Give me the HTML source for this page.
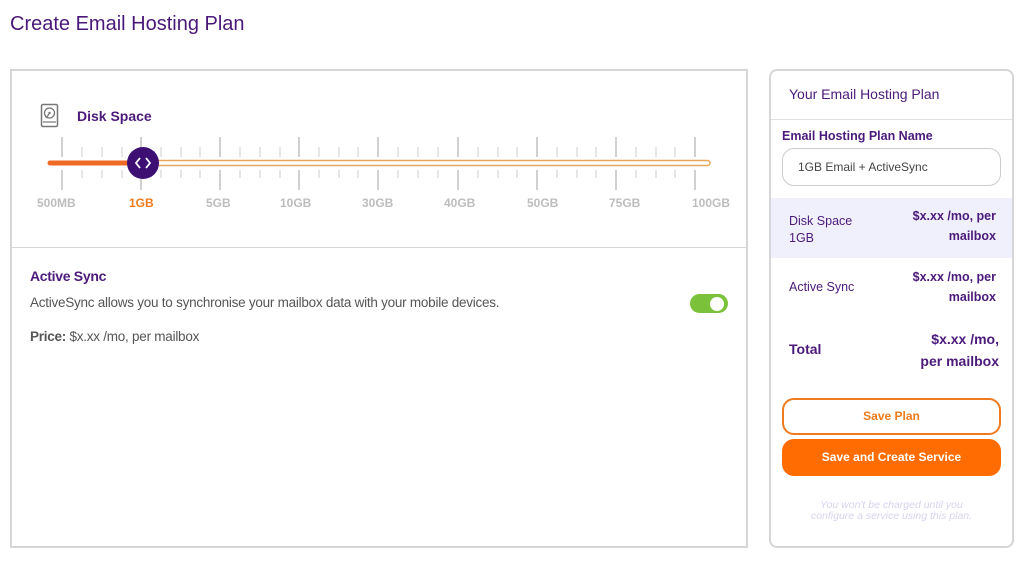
<!DOCTYPE html>
<html><head><meta charset="utf-8"><style>
*{margin:0;padding:0;box-sizing:border-box}
body{width:1024px;height:561px;background:#fff;font-family:"Liberation Sans",sans-serif;position:relative;overflow:hidden}
.a{position:absolute;white-space:nowrap}
.p{color:#4b1a7a}
</style></head><body>
<div class="a p" style="left:10px;top:13px;font-size:20px;color:#4a1878">Create Email Hosting Plan</div>

<div class="a" style="left:10px;top:69px;width:738px;height:479px;border:2px solid #d6d6d9"></div>
<div class="a" style="left:11px;top:247px;width:736px;height:1px;background:#d6d6d9"></div>

<svg class="a" style="left:40px;top:103px" width="20" height="26" viewBox="0 0 20 26"><rect x="1.5" y="1.5" width="16" height="22" rx="1.5" fill="none" stroke="#777" stroke-width="1.5"/><circle cx="9.5" cy="10" r="5" fill="none" stroke="#777" stroke-width="1.3"/><circle cx="9.5" cy="10" r="1.2" fill="#777"/><line x1="9" y1="11" x2="6" y2="15" stroke="#777" stroke-width="1.3"/><line x1="3" y1="19" x2="16" y2="19" stroke="#777" stroke-width="1.2"/></svg>
<div class="a p" style="left:77px;top:108px;font-size:14px;font-weight:bold">Disk Space</div>

<svg class="a" style="left:0;top:130px" width="760" height="90">
<g stroke="#c4c4c4" stroke-width="1.6">
<path d="M62 7v20M62 40v20M141 7v20M141 40v20M220 7v20M220 40v20M299 7v20M299 40v20M378 7v20M378 40v20M458 7v20M458 40v20M537 7v20M537 40v20M616 7v20M616 40v20M695 7v20M695 40v20"/>
</g>
<g stroke="#dcdcdc" stroke-width="1.4" id="m"></g>
<path stroke="#dcdcdc" stroke-width="1.4" d="
M82 17v10M82 40v8M102 17v10M102 40v8M122 17v10M122 40v8
M161 17v10M161 40v8M181 17v10M181 40v8M200 17v10M200 40v8
M240 17v10M240 40v8M260 17v10M260 40v8M280 17v10M280 40v8
M319 17v10M319 40v8M339 17v10M339 40v8M358 17v10M358 40v8
M398 17v10M398 40v8M418 17v10M418 40v8M438 17v10M438 40v8
M478 17v10M478 40v8M498 17v10M498 40v8M517 17v10M517 40v8
M557 17v10M557 40v8M577 17v10M577 40v8M596 17v10M596 40v8
M636 17v10M636 40v8M656 17v10M656 40v8M675 17v10M675 40v8"/>
<rect x="143" y="30.5" width="567" height="5" rx="2.5" fill="#fff" stroke="#e8a65a" stroke-width="1.4"/>
<line x1="50" y1="33" x2="143" y2="33" stroke="#ef6a24" stroke-width="5" stroke-linecap="round"/>
<circle cx="143" cy="33" r="16" fill="#3d0f73"/>
<path d="M140 28l-4 5 4 5M146 28l4 5-4 5" fill="none" stroke="#fff" stroke-width="1.8"/>
</svg>
<div class="a" style="top:196px;left:0;width:760px;font-size:12px;color:#bdbdbd;font-weight:bold">
<span class="a" style="left:37px">500MB</span><span class="a" style="left:129px;color:#ef7a1a">1GB</span><span class="a" style="left:206px">5GB</span><span class="a" style="left:280px">10GB</span><span class="a" style="left:362px">30GB</span><span class="a" style="left:444px">40GB</span><span class="a" style="left:527px">50GB</span><span class="a" style="left:609px">75GB</span><span class="a" style="left:692px">100GB</span></div>

<div class="a p" style="left:30px;top:268px;font-size:14px;font-weight:bold;letter-spacing:-0.3px">Active Sync</div>
<div class="a" style="left:30px;top:295px;font-size:13.5px;color:#555;letter-spacing:-0.25px">ActiveSync allows you to synchronise your mailbox data with your mobile devices.</div>
<div class="a" style="left:30px;top:329px;font-size:13.5px;color:#555;letter-spacing:-0.25px"><b>Price:</b> $x.xx /mo, per mailbox</div>
<div class="a" style="left:690px;top:294px;width:38px;height:19px;border-radius:10px;background:#7cc13a"></div>
<div class="a" style="left:710px;top:297px;width:14px;height:14px;border-radius:50%;background:#fff"></div>

<div class="a" style="left:769px;top:69px;width:245px;height:479px;border:2px solid #d6d6d9;border-radius:8px"></div>
<div class="a" style="left:771px;top:119px;width:241px;height:1px;background:#e0e0e0"></div>
<div class="a p" style="left:789px;top:86px;font-size:14px">Your Email Hosting Plan</div>
<div class="a p" style="left:782px;top:129px;font-size:12.5px;font-weight:bold">Email Hosting Plan Name</div>
<div class="a" style="left:782px;top:148px;width:219px;height:38px;border:1px solid #ccc;border-radius:12px;font-size:12px;color:#444;padding:11px 0 0 15px">1GB Email + ActiveSync</div>
<div class="a" style="left:771px;top:198px;width:241px;height:60px;background:#f0effc"></div>
<div class="a p" style="left:789px;top:213px;font-size:12.5px;line-height:17px">Disk Space<br>1GB</div>
<div class="a p" style="right:28px;top:206px;font-size:12.5px;line-height:20px;text-align:right;font-weight:bold">$x.xx /mo, per<br>mailbox</div>
<div class="a p" style="left:789px;top:280px;font-size:12.5px">Active Sync</div>
<div class="a p" style="right:28px;top:267px;font-size:12.5px;line-height:20px;text-align:right;font-weight:bold">$x.xx /mo, per<br>mailbox</div>
<div class="a p" style="left:789px;top:341px;font-size:14px;font-weight:bold">Total</div>
<div class="a p" style="right:25px;top:328px;font-size:14px;line-height:22px;text-align:right;font-weight:bold">$x.xx /mo,<br>per mailbox</div>
<div class="a" style="left:782px;top:398px;width:219px;height:37px;border:2px solid #f07a1e;border-radius:12px;text-align:center;font-size:12px;font-weight:bold;color:#ef7a1a;line-height:33px">Save Plan</div>
<div class="a" style="left:782px;top:439px;width:219px;height:37px;background:#fe6c02;border-radius:12px;text-align:center;font-size:12px;font-weight:bold;color:#fff;line-height:37px">Save and Create Service</div>
<div class="a" style="left:782px;top:500px;width:219px;text-align:center;font-size:10.5px;line-height:11px;font-style:italic;color:#d6d3ee">You won't be charged until you<br>configure a service using this plan.</div>
</body></html>
